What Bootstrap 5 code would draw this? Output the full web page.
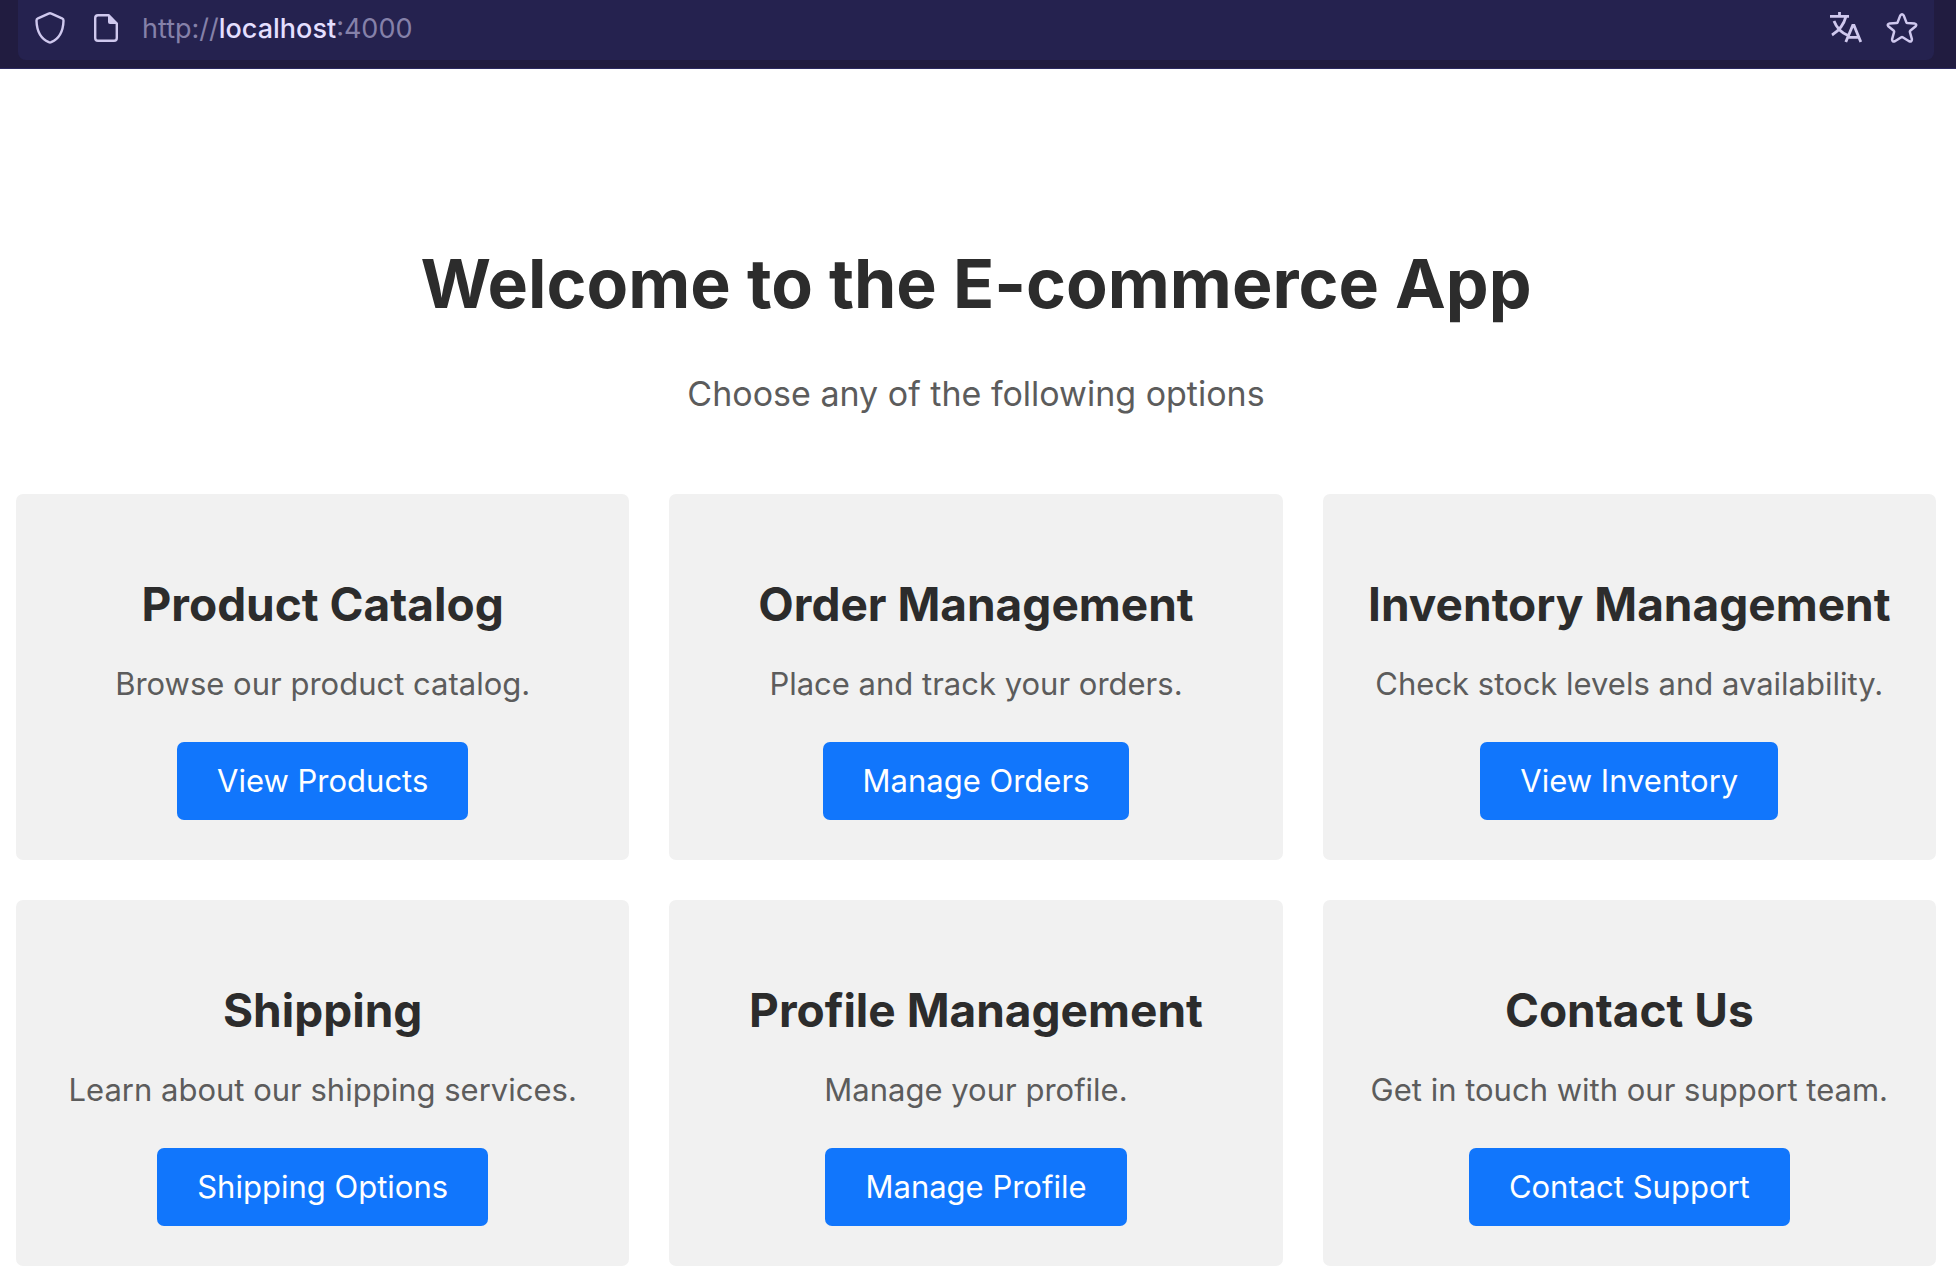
<!DOCTYPE html>
<html lang="en">
<head>
<meta charset="utf-8">
<meta name="viewport" content="width=device-width, initial-scale=1">
<title>E-commerce App</title>
<link href="https://cdn.jsdelivr.net/npm/bootstrap@5.3.0/dist/css/bootstrap.min.css" rel="stylesheet">
<style>
  body { font-family: Inter, "Liberation Sans", sans-serif; color: #2c2c2c; background: #fff; }
  .toolbar { background: #211c40; border-bottom: 1px solid #2c2960; padding: 0 22px 8px 18px; }
  .url-box { background: #25224f; height: 60px; border-radius: 0 0 8px 8px; padding: 0 16px 2px; color: #cfc8ee; }
  .tool { color: inherit; line-height: 0; }
  .address { font-size: 27px; line-height: 34px; color: #8581a9; margin-left: 20px; }
  .address strong { font-weight: 500; color: #e4dfff; }
  .page { padding: 172px 20px 20px 16px; }
  .page-title { font-size: 68px; line-height: 84px; font-weight: 700; margin-bottom: 49px; }
  .page-intro { font-size: 34px; line-height: 40px; color: #5c5c5c; margin-bottom: 80px; }
  .options { --bs-gutter-x: 40px; --bs-gutter-y: 40px; }
  .option { --bs-card-bg: #f1f1f1; --bs-card-border-width: 0; --bs-card-border-radius: 7px; padding: 82px 20px 40px; }
  .option-title { font-size: 46px; line-height: 56px; font-weight: 700; margin-bottom: 32px; }
  .option-text { font-size: 31px; line-height: 40px; color: #5c5c5c; margin-bottom: 38px; }
  .option-btn { --bs-btn-font-size: 31px; --bs-btn-line-height: 40px; --bs-btn-padding-x: 40px; --bs-btn-padding-y: 19px;
    --bs-btn-border-width: 0; --bs-btn-border-radius: 7px; --bs-btn-bg: #1176fc; }
</style>
<script src="https://cdn.jsdelivr.net/npm/bootstrap@5.3.0/dist/js/bootstrap.bundle.min.js" defer></script>
</head>
<body>
<header class="toolbar">
  <div class="url-box d-flex align-items-center">
    <button type="button" class="tool btn p-0 border-0" aria-label="Tracking protection">
      <svg width="32" height="34" viewBox="0 0 32 34" fill="none" stroke="currentColor" stroke-width="2.4" stroke-linejoin="round"><path d="M14.6 1.600Q16 1 17.400 1.600L28 6.300Q29.600 7.100 29.500 8.700C29.200 19 25.300 26.600 17.200 30.200Q16 30.700 14.800 30.200C6.700 26.600 2.800 19 2.500 8.700Q2.400 7.100 4 6.300Z"/></svg>
    </button>
    <button type="button" class="tool btn p-0 border-0 ms-4" aria-label="Site information">
      <svg width="32" height="34" viewBox="0 0 32 34"><path d="M8 3.200H18.500L26.800 11.500V26Q26.800 28.800 24 28.800H8Q5.200 28.800 5.200 26V6Q5.200 3.200 8 3.200Z" fill="none" stroke="currentColor" stroke-width="2.400" stroke-linejoin="round"/><path d="M18 2.500V10Q18 12 20 12H27.500V11L19 2.500Z" fill="currentColor"/></svg>
    </button>
    <div class="address me-auto">http://<strong>localhost</strong>:4000</div>
    <button type="button" class="tool btn p-0 border-0" aria-label="Translate this page">
      <svg width="34" height="34" viewBox="0 0 34 34" fill="none" stroke="currentColor" stroke-width="2.800"><path d="M2 4.400H21M11.500 0V4.400M18 4.400C16 12 11.500 18.500 4 23M6 9C8.500 15.500 13 20.500 19.500 23.200M17.800 30L24.700 13.400H26L32.800 30M20 25.300H31"/></svg>
    </button>
    <button type="button" class="tool btn p-0 border-0 ms-4" aria-label="Bookmark this page">
      <svg width="32" height="34" viewBox="0 0 32 34" fill="none" stroke="currentColor" stroke-width="2.500" stroke-linejoin="round"><path d="M14.300 3.400Q16 1.200 17.700 3.400L20.400 10.400Q20.700 11 21.400 11L28.400 11.400Q31.300 12 29.700 14.300L24.200 18.800Q23.700 19.300 23.900 20L25.900 27.200Q25.900 30.200 23.100 29.300L16.700 25.300Q16 24.900 15.300 25.300L8.900 29.300Q6.100 30.200 6.100 27.200L8.100 20Q8.300 19.300 7.800 18.800L2.300 14.300Q.7 12 3.600 11.400L10.600 11Q11.300 11 11.600 10.400Z"/></svg>
    </button>
  </div>
</header>
<main class="page text-center">
  <h1 class="page-title">Welcome to the E-commerce App</h1>
  <p class="page-intro">Choose any of the following options</p>
  <div class="options row row-cols-1 row-cols-md-2 row-cols-xl-3">
    <div class="col"><section class="card option h-100 align-items-center">
      <h2 class="option-title">Product Catalog</h2>
      <p class="option-text">Browse our product catalog.</p>
      <a href="#products" class="btn btn-primary option-btn mt-auto">View Products</a>
    </section></div>
    <div class="col"><section class="card option h-100 align-items-center">
      <h2 class="option-title">Order Management</h2>
      <p class="option-text">Place and track your orders.</p>
      <a href="#orders" class="btn btn-primary option-btn mt-auto">Manage Orders</a>
    </section></div>
    <div class="col"><section class="card option h-100 align-items-center">
      <h2 class="option-title">Inventory Management</h2>
      <p class="option-text">Check stock levels and availability.</p>
      <a href="#inventory" class="btn btn-primary option-btn mt-auto">View Inventory</a>
    </section></div>
    <div class="col"><section class="card option h-100 align-items-center">
      <h2 class="option-title">Shipping</h2>
      <p class="option-text">Learn about our shipping services.</p>
      <a href="#shipping" class="btn btn-primary option-btn mt-auto">Shipping Options</a>
    </section></div>
    <div class="col"><section class="card option h-100 align-items-center">
      <h2 class="option-title">Profile Management</h2>
      <p class="option-text">Manage your profile.</p>
      <a href="#profile" class="btn btn-primary option-btn mt-auto">Manage Profile</a>
    </section></div>
    <div class="col"><section class="card option h-100 align-items-center">
      <h2 class="option-title">Contact Us</h2>
      <p class="option-text">Get in touch with our support team.</p>
      <a href="#contact" class="btn btn-primary option-btn mt-auto">Contact Support</a>
    </section></div>
  </div>
</main>
</body>
</html>
